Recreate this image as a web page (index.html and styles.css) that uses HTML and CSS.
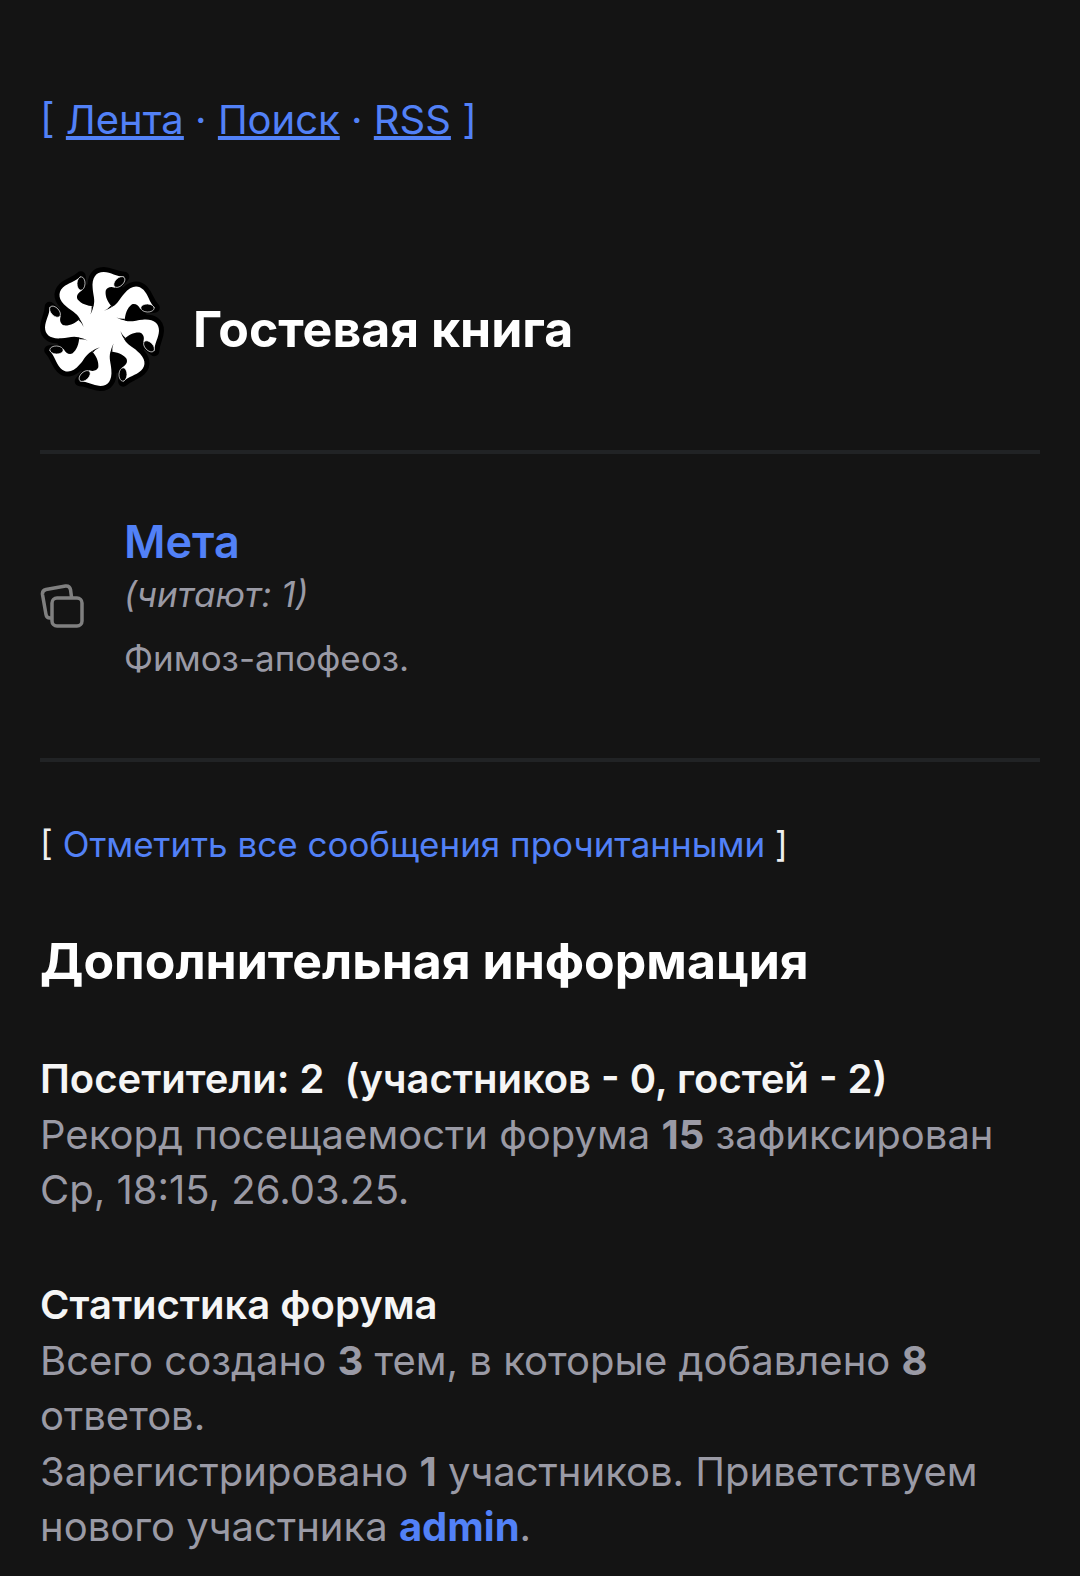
FILE: index.html
```html
<!DOCTYPE html>
<html lang="ru">
<head>
    <meta charset="UTF-8">
    <meta name="viewport" content="width=device-width, initial-scale=1.0">
    <title>Гостевая книга</title>
    <link rel="stylesheet" href="styles.css">
</head>
<body>
    <nav class="top-nav">
        [ <a href="#feed">Лента</a> · <a href="#search">Поиск</a> · <a href="#rss">RSS</a> ]
    </nav>

    <main>
        <header class="forum-header">
            <svg class="logo" viewBox="-186 -186 372 372" aria-hidden="true">
                <defs>
                    <path id="arm" d="M-25 0 L-25 -70 C-20 -88 -27 -103 -28 -122 C-31 -154 -18 -171 5 -171 C28 -170 42 -157 67 -157 L38 -124 C26 -128 15 -125 11 -115 C9 -98 17 -80 31 -66 L20 0 Z"/>
                    <g id="arms">
                        <circle r="72"/>
                        <use href="#arm"/>
                        <use href="#arm" transform="rotate(45)"/>
                        <use href="#arm" transform="rotate(90)"/>
                        <use href="#arm" transform="rotate(135)"/>
                        <use href="#arm" transform="rotate(180)"/>
                        <use href="#arm" transform="rotate(225)"/>
                        <use href="#arm" transform="rotate(270)"/>
                        <use href="#arm" transform="rotate(315)"/>
                    </g>
                    <!-- присоска на конце и складка у основания -->
                    <g id="detail">
                        <ellipse cx="52" cy="-141" rx="20" ry="12" transform="rotate(-43 52 -141)" fill="#000" stroke="#fff" stroke-width="2"/>
                        <path d="M31 -67 Q21 -60 6 -55 Q19 -61 26 -70 Z" fill="#000"/>
                    </g>
                </defs>
                <circle r="140" fill="#000"/>
                <use href="#arms" fill="#000" stroke="#000" stroke-width="30" stroke-linejoin="round"/>
                <use href="#arms" fill="#fff"/>
                <use href="#detail"/>
                <use href="#detail" transform="rotate(45)"/>
                <use href="#detail" transform="rotate(90)"/>
                <use href="#detail" transform="rotate(135)"/>
                <use href="#detail" transform="rotate(180)"/>
                <use href="#detail" transform="rotate(225)"/>
                <use href="#detail" transform="rotate(270)"/>
                <use href="#detail" transform="rotate(315)"/>
            </svg>
            <h1>Гостевая книга</h1>
        </header>

        <section class="forum-row">
            <svg class="forum-icon" viewBox="0 0 44 44" stroke-width="3.5" aria-hidden="true">
                <path d="M11 34 H10 Q6.500 34 6 30.500 L2.500 10.500 Q2 6.500 6 5.500 L25.500 2 Q29.500 1.500 30.500 5.500 L31.500 13"/>
                <rect x="12" y="14" width="30" height="28" rx="5"/>
            </svg>
            <div class="forum-info">
                <h2 class="forum-title"><a href="#meta">Мета</a></h2>
                <p class="forum-readers">(читают: 1)</p>
                <p class="forum-text">Фимоз-апофеоз.</p>
            </div>
        </section>

        <p class="mark-read">[ <a href="#read">Отметить все сообщения прочитанными</a> ]</p>

        <section class="extra">
            <h2>Дополнительная информация</h2>

            <div class="extra-block">
                <h3>Посетители: 2&nbsp; (участников - 0, гостей - 2)</h3>
                <p>Рекорд посещаемости форума <b>15</b> зафиксирован Ср, 18:15, 26.03.25.</p>
            </div>

            <div class="extra-block">
                <h3>Статистика форума</h3>
                <p>Всего создано <b>3</b> тем, в которые добавлено <b>8</b> ответов.</p>
                <p>Зарегистрировано <b>1</b> участников. Приветствуем нового участника <a href="#admin"><b>admin</b></a>.</p>
            </div>
        </section>
    </main>
</body>
</html>
```
FILE: styles.css
```css
* {
    margin: 0;
    padding: 0;
    box-sizing: border-box;
}

body {
    font-family: Inter, sans-serif;
    font-size: 40px;
    line-height: 55px;
    background-color: #141414;
    color: #9a9aa5;
    padding: 92px 40px 0;
}

a {
    color: #5281f7;
    text-decoration: none;
}

/* верхнее меню */
.top-nav {
    color: #5281f7;
    margin-bottom: 120px;
}

.top-nav a {
    text-decoration: underline;
}

/* шапка */
.forum-header {
    display: flex;
    align-items: center;
    gap: 29px;
    padding-bottom: 59px;
    border-bottom: 4px solid #212325;
}

.logo {
    width: 124px;
    height: 124px;
    flex-shrink: 0;
}

h1,
.extra h2 {
    font-size: 50px;
    line-height: 60px;
    font-weight: 700;
    color: #fff;
}

/* строка форума */
.forum-row {
    display: flex;
    align-items: center;
    gap: 40px;
    padding: 60px 0;
    border-bottom: 4px solid #212325;
}

.forum-icon {
    width: 44px;
    height: 44px;
    flex-shrink: 0;
    fill: none;
    stroke: #808080;
    stroke-linecap: round;
}

.forum-title {
    font-size: 45px;
    line-height: 56px;
    font-weight: 600;
}

.forum-readers,
.forum-text,
.mark-read {
    font-size: 35px;
    line-height: 48px;
}

.forum-readers {
    font-style: italic;
}

.forum-text {
    margin: 16px 0;
}

.mark-read {
    color: #eee;
    margin: 58px 0 63px;
}

/* статистика */
.extra-block {
    margin-top: 60px;
}

.extra-block h3 {
    font-size: 40px;
    font-weight: 600;
    color: #f5f5f5;
}

.extra-block p {
    margin-top: 1px;
}

.extra-block b {
    font-weight: 700;
}
```
